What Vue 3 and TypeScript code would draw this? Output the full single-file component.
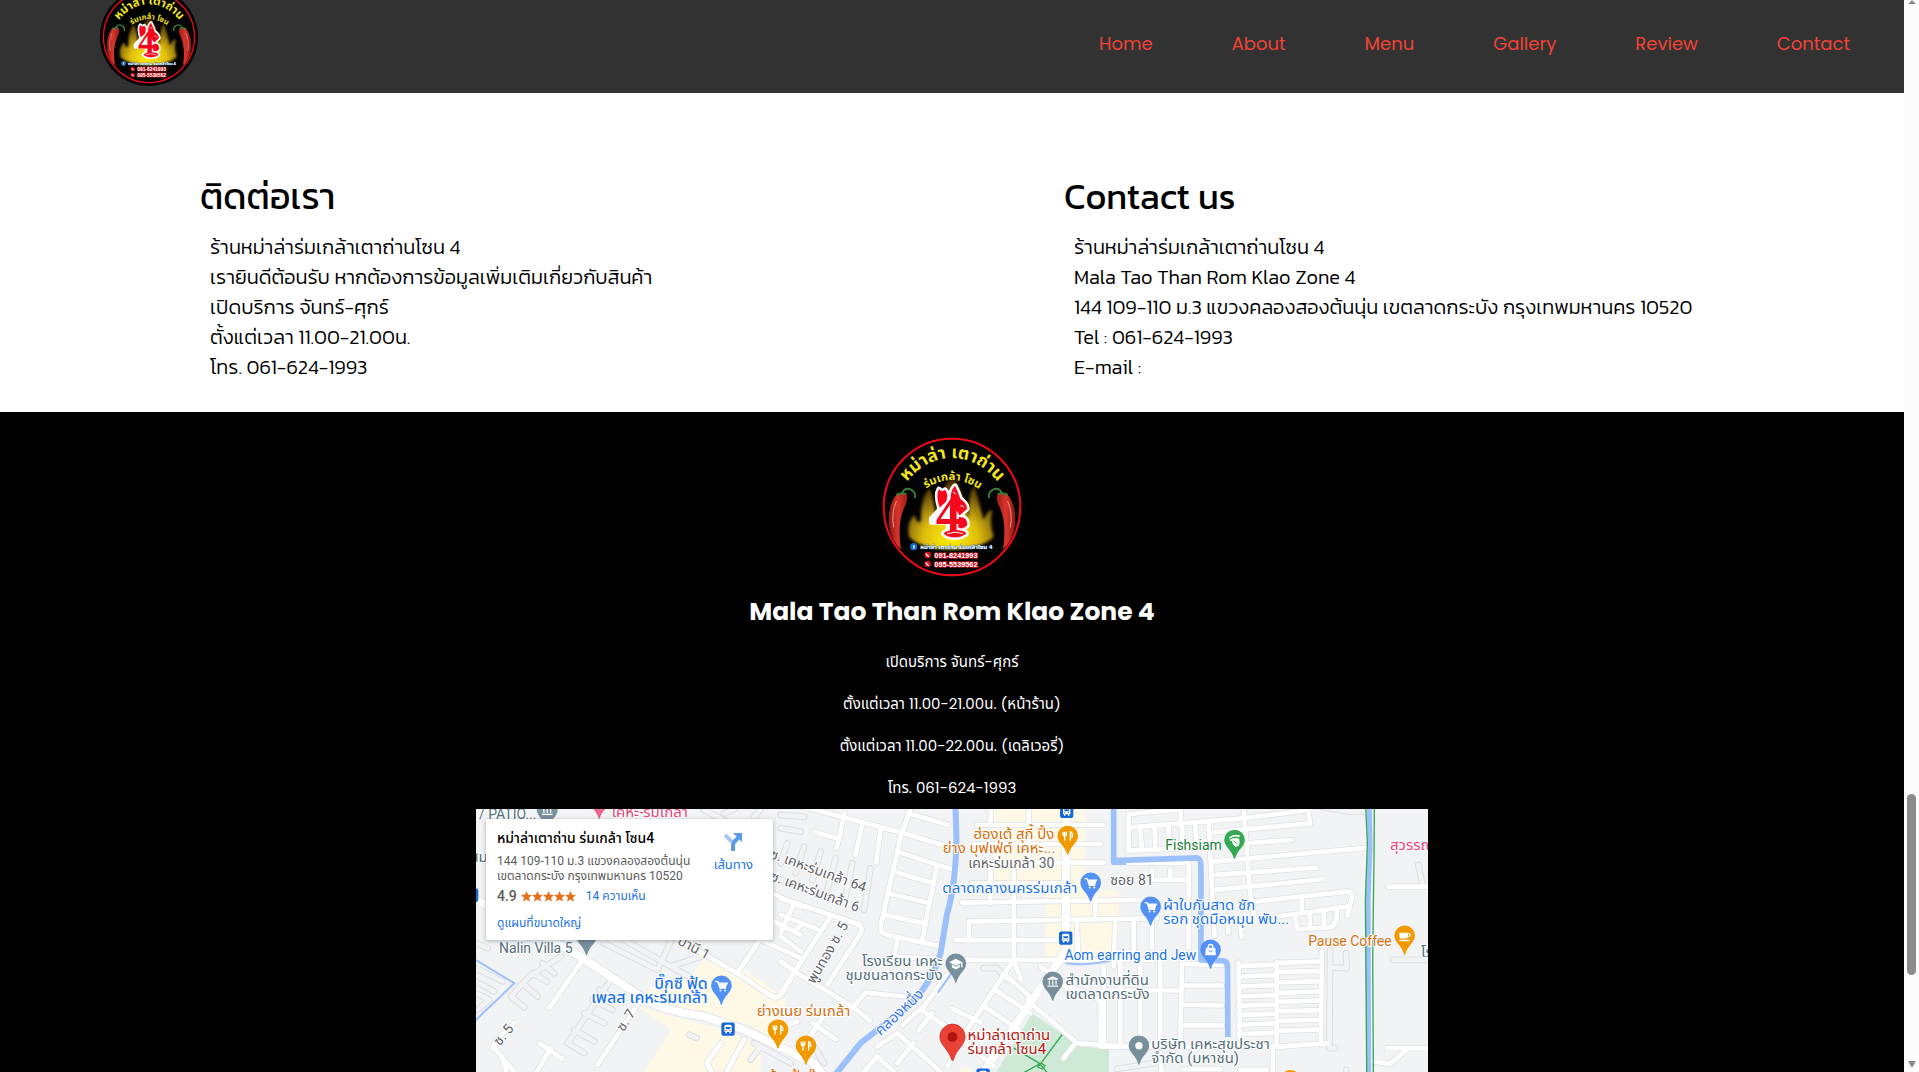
<script setup lang="ts">
interface Block { title: string; lines: string[] }
interface Sheet { dx: number; main: string[]; minor: string[]; lane: string[] }
interface Pin { x: number; y: number; color: string; icon: string }
interface Label { text: string; x: number; y: number; tone: string; end?: boolean; mid?: boolean; turn?: number }
interface Mark { text: string; x: number; y: number; kind: string; size: number }
interface Arc { text: string; path: string; size: number }

const links: string[] = ['Home', 'About', 'Menu', 'Gallery', 'Review', 'Contact']

const blocks: Block[] = [
  {
    title: 'ติดต่อเรา',
    lines: [
      'ร้านหม่าล่าร่มเกล้าเตาถ่านโซน 4',
      'เรายินดีต้อนรับ หากต้องการข้อมูลเพิ่มเติมเกี่ยวกับสินค้า',
      'เปิดบริการ จันทร์-ศุกร์',
      'ตั้งแต่เวลา 11.00-21.00น.',
      'โทร. 061-624-1993',
    ],
  },
  {
    title: 'Contact us',
    lines: [
      'ร้านหม่าล่าร่มเกล้าเตาถ่านโซน 4',
      'Mala Tao Than Rom Klao Zone 4',
      '144 109-110 ม.3 แขวงคลองสองต้นนุ่น เขตลาดกระบัง กรุงเทพมหานคร 10520',
      'Tel : 061-624-1993',
      'E-mail :',
    ],
  },
]

const hours: string[] = [
  'เปิดบริการ จันทร์-ศุกร์',
  'ตั้งแต่เวลา 11.00-21.00น. (หน้าร้าน)',
  'ตั้งแต่เวลา 11.00-22.00น. (เดลิเวอรี่)',
  'โทร. 061-624-1993',
]

// Lettering of the round badge.
const arcs: Arc[] = [
  { text: 'หม่าล่า เตาถ่าน', path: '#arc-top', size: 52 },
  { text: 'ร่มเกล้า โซน', path: '#arc-mid', size: 34 },
]
const marks: Mark[] = [
  { text: '4', x: 228, y: 334, kind: 'four', size: 150 },
  { text: 'f', x: 159, y: 387, kind: 'plain', size: 18 },
  { text: 'หม่าล่า เตาถ่าน ร่มเกล้าโซน 4', x: 182, y: 387, kind: 'note', size: 18 },
  { text: '091-8241993', x: 224, y: 413, kind: 'phone', size: 22 },
  { text: '095-5539562', x: 224, y: 440, kind: 'phone', size: 22 },
]

const rungs = (x1: number, x2: number, ys: number[]): string[] => ys.map((y) => `M${x1} ${y}L${x2} ${y - 4}`)

// Streets, grouped by the three sheets of the map: west, centre, east.
const sheets: Sheet[] = [
  {
    dx: 0,
    main: ['M0 290L320 465L510 590Q560 630 700 650L820 690L1030 790L1060 830'],
    minor: [
      'M335 480L235 625', 'M510 600L380 795', 'M590 400L800 520L900 588Q920 600 935 580L975 510', 'M800 520L880 400',
      'M850 410L990 475', 'M905 280L990 320', 'M930 400L970 310', 'M205 730L275 778', 'M240 745L190 830',
      'M70 745L130 816', 'M110 830L95 780', 'M65 745Q70 720 130 670', 'M900 360L990 405', 'M820 720L760 830', 'M750 730L708 790L730 830',
      'M900 690L980 665',
    ],
    lane: [
      'M120 590L175 530L270 470', 'M120 590L160 622', 'M155 550L200 590', 'M185 520L228 545', 'M215 490L250 520',
      'M15 430L50 445', 'M15 505L95 545', 'M15 545L70 575', 'M15 580L55 600L20 630', 'M420 540L290 730L340 760',
      'M340 640L400 670', 'M365 600L425 630', 'M310 690L370 725', 'M385 570L440 600', 'M400 430L560 510L600 425',
      'M460 420L600 500L690 470', 'M600 500L655 530', 'M655 705L678 715', 'M850 730L960 790',
      'M870 740L840 780', 'M700 30L760 60', 'M760 40L790 28', 'M850 50L870 28',
    ],
  },
  {
    dx: 930,
    main: ['M858 20L856 440Q850 470 835 485L600 830'],
    minor: [
      'M60 18L370 100L495 138', 'M192 40L168 145', 'M100 95L168 115', 'M245 72L225 165', 'M300 90L287 188',
      'M390 42L502 74', 'M392 20L360 110L300 380Q298 398 320 405L475 438', 'M350 155L510 207', 'M470 195L425 420',
      'M340 215L458 250', 'M322 280L448 310', 'M312 345L438 372', 'M350 420L340 470L480 478', 'M0 295L225 370Q250 380 240 400L140 555',
      'M150 350L0 580', 'M0 345L110 388', 'M48 388L65 372', 'M0 410L62 455', 'M0 485L50 520L215 620L268 662', 'M212 628L255 578L370 590',
      'M500 525L430 620L365 675', 'M425 632L510 690L640 800', 'M415 692L455 640', 'M512 625L600 668', 'M700 480L560 690L500 800',
      'M700 200L700 480L722 540', 'M652 575L750 640', 'M612 620L715 690', 'M680 530L760 600', 'M560 480L1120 480', 'M740 600L890 730L1020 740',
      'M885 730L850 775', 'M962 600L960 735', 'M590 75L970 75', 'M580 132L960 132', 'M600 188L970 188', 'M575 250L850 250',
      'M545 308L1090 300', 'M565 415L565 365L1130 355', 'M525 421L845 421', 'M632 20L630 75', 'M745 20L745 200', 'M630 210L630 310',
      'M890 360L892 460', 'M945 260L945 360', 'M95 670L165 718', 'M135 640L75 730', 'M290 740L350 700L480 816', 'M250 816L290 770L340 816',
      'M400 730L350 790', 'M780 500L880 580', 'M830 540L960 600',
    ],
    lane: [
      'M20 130L0 190', 'M70 140L45 220', 'M120 155L95 240', 'M165 175L140 270', 'M215 190L195 290', 'M270 205L250 330', 'M0 240L140 290',
      'M0 45L70 50', 'M0 85L60 95', 'M610 505L650 505L680 540', 'M100 740L130 790',
    ],
  },
  {
    dx: 1890,
    main: [],
    minor: [
      'M240 20L243 80', 'M85 150L85 42L240 28', 'M82 152L320 142', 'M90 82L430 55L628 30', 'M335 98L630 70L622 20', 'M120 85L125 150', 'M163 82L165 148',
      'M205 80L207 146', 'M245 78L248 144', 'M285 76L290 142', 'M325 65L343 408', 'M430 20L450 280L465 370', 'M340 185L805 143', 'M440 130L575 120',
      'M345 225L648 203', 'M345 270L668 238', 'M465 305L740 275Q760 275 755 295L742 348', 'M605 295L605 340', 'M530 350L745 320',
      'M585 350L592 388L690 382Q712 378 710 330', 'M628 345L630 385', 'M670 335L672 382', 'M82 188L265 188L265 445', 'M165 240L265 240', 'M155 208L155 240',
      'M210 210L210 240', 'M45 360L40 500', 'M100 365L100 470', 'M155 365L155 445', 'M383 370L385 398', 'M420 365L425 412', 'M245 492L365 495',
      'M245 492L240 740', 'M248 557L365 557', 'M246 615L365 617', 'M244 677L365 677', 'M180 480L180 740', 'M120 480L120 740', 'M60 490L60 730', 'M10 500L10 740',
      'M0 740L520 742L680 730', 'M0 572L240 572', 'M415 488L420 740', 'M530 488L530 740', 'M665 455L662 735',
      ...rungs(415, 525, [499, 530, 560, 590, 618, 646, 675, 703]), ...rungs(530, 662, [489, 517, 548, 579, 606, 635, 664, 693]),
      'M865 260L990 260', 'M860 745L990 745', 'M818 785L870 792L920 750', 'M518 740L518 830', 'M250 808L360 808', 'M420 810L500 810', 'M180 760L185 830',
    ],
    lane: ['M690 450L688 745L705 745', 'M738 460L740 505L695 503', 'M955 195L968 255', 'M880 480L990 480', 'M50 808L190 785', 'M660 20L750 35L800 35', 'M738 810L738 830'],
  },
]

const blue = '#5491f5'
const slate = '#78909c'
const amber = '#f29900'

const pins: Pin[] = [
  { x: 229, y: 30, color: slate, icon: 'hall' },
  { x: 385, y: 0, color: '#f06292', icon: '' },
  { x: 347, y: 409, color: slate, icon: '' },
  { x: 752, y: 558, color: blue, icon: 'cart' },
  { x: 922, y: 690, color: amber, icon: 'food' },
  { x: 1006, y: 738, color: amber, icon: 'food' },
  { x: 1792, y: 108, color: amber, icon: 'food' },
  { x: 1861, y: 249, color: blue, icon: 'cart' },
  { x: 1456, y: 492, color: slate, icon: 'school' },
  { x: 1747, y: 546, color: slate, icon: 'hall' },
  { x: 2293, y: 120, color: '#34a853', icon: 'fish' },
  { x: 2041, y: 321, color: blue, icon: 'cart' },
  { x: 2221, y: 450, color: blue, icon: 'bag' },
  { x: 2804, y: 408, color: amber, icon: 'cup' },
  { x: 2006, y: 738, color: slate, icon: 'dot' },
  { x: 2461, y: 842, color: amber, icon: '' },
]

const stops: number[][] = [[772, 688], [1789, 34], [1786, 415], [1538, 826], [2, 286]]

const labels: Label[] = [
  { text: '/ PATIO...', x: 3, y: 10, tone: 'slate' },
  { text: 'เคหะ-ร่มเกล้า', x: 136, y: 8, tone: 'pink' },
  { text: 'สม', x: -6, y: 53, tone: 'slate' },
  { text: 'Nalin Villa 5', x: 23, y: 144, tone: 'slate' },
  { text: 'บิ๊กซี ฟู้ด', x: 232, y: 180, tone: 'blue bold', end: true },
  { text: 'เพลส เคหะร่มเกล้า', x: 232, y: 194, tone: 'blue bold', end: true },
  { text: 'ย่างเนย ร่มเกล้า', x: 281, y: 207, tone: 'orange' },
  { text: 'ร้านป้าตุ๊ก', x: 293, y: 272, tone: 'orange' },
  { text: 'ซ. 5', x: 31, y: 229, tone: 'road', mid: true, turn: -50 },
  { text: 'ซ. 7', x: 154, y: 214, tone: 'road', mid: true, turn: -57 },
  { text: 'ปานี 1', x: 216, y: 143, tone: 'road', mid: true, turn: 28 },
  { text: 'พูนทอง ซ. 5', x: 356, y: 146, tone: 'road', mid: true, turn: -60 },
  { text: 'ซ. เคหะร่มเกล้า 64', x: 341, y: 66, tone: 'road', mid: true, turn: 20 },
  { text: 'ซ. เคหะร่มเกล้า 6', x: 338, y: 87, tone: 'road', mid: true, turn: 20 },
  { text: 'คลองหนึ่ง', x: 427, y: 207, tone: 'water', mid: true, turn: -43 },
  { text: 'ฮ่องเต้ สุกี้ ปิ้ง', x: 579, y: 30, tone: 'orange', end: true },
  { text: 'ย่าง บุฟเฟ่ต์ เคหะ...', x: 580, y: 44, tone: 'orange', end: true },
  { text: 'เคหะร่มเกล้า 30', x: 579, y: 59, tone: 'road', end: true },
  { text: 'ตลาดกลางนครร่มเกล้า', x: 602, y: 84, tone: 'blue', end: true },
  { text: 'โรงเรียน เคหะ', x: 467, y: 157, tone: 'slate', end: true },
  { text: 'ชุมชนลาดกระบัง', x: 467, y: 171, tone: 'slate', end: true },
  { text: 'Aom earring and Jew', x: 589, y: 151, tone: 'blue' },
  { text: 'สำนักงานที่ดิน', x: 590, y: 176, tone: 'slate' },
  { text: 'เขตลาดกระบัง', x: 590, y: 190, tone: 'slate' },
  { text: 'หม่าล่าเตาถ่าน', x: 492, y: 231, tone: 'red' },
  { text: 'ร่มเกล้า โซน4', x: 492, y: 245, tone: 'red' },
  { text: 'Fishsiam', x: 690, y: 41, tone: 'green' },
  { text: 'ซอย 81', x: 635, y: 76, tone: 'road' },
  { text: 'ผ้าใบกันสาด ชัก', x: 688, y: 101, tone: 'blue' },
  { text: 'รอก ชุดมือหมุน พับ...', x: 688, y: 115, tone: 'blue' },
  { text: 'Pause Coffee', x: 833, y: 137, tone: 'orange' },
  { text: 'โรง', x: 946, y: 148, tone: 'slate' },
  { text: 'บริษัท เคหะสุขประชา', x: 676, y: 240, tone: 'slate' },
  { text: 'จำกัด (มหาชน)', x: 676, y: 254, tone: 'slate' },
  { text: 'สุวรรณภูมิ', x: 915, y: 41, tone: 'pink' },
]

const isThai = (l: Label): boolean => /[ก-๛]/.test(l.text)
const anchorOf = (l: Label): 'end' | 'middle' | 'start' => (l.end ? 'end' : l.mid ? 'middle' : 'start')
const turnOf = (l: Label): string | undefined => (l.turn ? `rotate(${l.turn} ${l.x} ${l.y})` : undefined)
</script>

<template>
  <div class="window">
    <svg class="defs" aria-hidden="true">
      <defs>
        <radialGradient id="flame" cx="50%" cy="85%" r="80%">
          <stop offset="0" stop-color="#fff200" />
          <stop offset="0.4" stop-color="#e0bd10" />
          <stop offset="1" stop-color="#6b4303" stop-opacity="0.6" />
        </radialGradient>
        <linearGradient id="chili" x1="0" x2="1">
          <stop offset="0" stop-color="#8e1712" />
          <stop offset="0.5" stop-color="#d8352c" />
          <stop offset="1" stop-color="#9d1c16" />
        </linearGradient>
        <filter id="glow" x="-20%" y="-20%" width="140%" height="140%"><feGaussianBlur stdDeviation="4" /></filter>
        <path id="arc-top" d="M128 204Q190 114 277 114Q364 114 428 204" />
        <path id="arc-mid" d="M188 214Q277 146 370 216" />
      </defs>
      <symbol id="badge" viewBox="52 36 450 450">
        <circle cx="277" cy="261" r="221" fill="#020202" />
        <path filter="url(#glow)" fill="url(#flame)" d="M148 350Q140 310 164 285Q176 320 184 300Q182 235 210 203Q226 245 226 300Q246 190 282 166Q310 220 326 300Q326 215 344 196Q358 250 372 300Q388 265 398 272Q388 310 402 350Q370 385 277 388Q180 386 148 350Z" />
        <circle cx="277" cy="261" r="205" fill="none" stroke="#ec0a18" stroke-width="6" />
        <g v-for="side in ['', 'translate(554 0) scale(-1 1)']" :key="side" :transform="side">
          <path fill="url(#chili)" d="M112 222Q128 216 142 226Q146 240 134 262Q112 310 124 388Q96 366 88 318Q82 256 112 222Z" />
          <path fill="none" stroke="#f09a90" stroke-width="3" d="M110 244Q94 280 102 322" />
          <path fill="none" stroke="#3c7d35" stroke-width="6" stroke-linecap="round" d="M112 224Q124 216 138 222M128 218Q138 200 156 210Q170 220 166 232" />
        </g>
        <g v-for="c in ['#fff', '#f5081b']" :key="c" :fill="c" :stroke="c" :stroke-width="c === '#fff' ? 16 : 1" stroke-linejoin="round">
          <path d="M240 262Q228 226 238 208Q246 218 256 210Q268 222 258 246ZM274 246Q270 214 286 198Q296 218 302 238Q320 248 322 266L300 286Z" />
          <path d="M298 292Q324 290 322 316Q310 330 296 322ZM252 340Q266 330 288 330Q314 332 320 340Q308 352 286 352Q262 352 252 340Z" />
          <path v-if="c === '#fff'" d="M262 246L216 296V306H266V330H296V306H306V240H270Z" />
        </g>
        <path fill="none" stroke="#fff" stroke-width="3" d="M262 341Q286 332 310 341M302 258Q308 254 314 262M280 216L290 222" />
        <circle cx="162" cy="380" r="11" fill="#1769c0" />
        <g v-for="y in [405, 432]" :key="y">
          <circle cx="204" :cy="y" r="10" fill="#e00b1b" />
          <path :d="`M199 ${y - 5}q2 8 9 10`" fill="none" stroke="#fff" stroke-width="4" />
        </g>
      </symbol>
      <symbol id="i-food" viewBox="-30 -30 60 60"><path d="M-14-13V-6Q-14 0-9 0T-4-6V-13M-9-13V14M8 14V-12Q15-10 14 2H8" fill="none" stroke="#fff" stroke-width="4" /></symbol>
      <symbol id="i-cart" viewBox="-30 -30 60 60"><path d="M-18-13h7l7 20h18M-9-8h26l-5 11H-5" fill="none" stroke="#fff" stroke-width="4" /><path d="M-8-7h24l-5 9H-5z" fill="#fff" /><circle cx="-3" cy="14" r="3" fill="#fff" /><circle cx="11" cy="14" r="3" fill="#fff" /></symbol>
      <symbol id="i-school" viewBox="-30 -30 60 60"><path d="M0-15L20-5L0 6L-20-5ZM-12 2L0 9L12 2V10L0 17L-12 10ZM16-4h4v14h-4z" fill="#fff" /></symbol>
      <symbol id="i-hall" viewBox="-30 -30 60 60"><path d="M0-17L16-9v3h-32v-3ZM-12-4h4V9h-4zM-2-4h4V9h-4zM8-4h4V9H8zM-16 11h32v4h-32z" fill="#fff" /></symbol>
      <symbol id="i-fish" viewBox="-30 -30 60 60"><path d="M-16-8Q-4-20 16-14L14-8Q0-14-16-4ZM-16 0Q-2-10 14-4Q20 20 2 20Q-6 14-8 4Z" fill="#fff" /><path d="M-4 2L8 12" stroke="#34a853" stroke-width="3" /></symbol>
      <symbol id="i-bag" viewBox="-30 -30 60 60"><path d="M-14-6h28l2 22h-32z" fill="#fff" /><path d="M-7-4v-5q0-7 7-7t7 7v5" fill="none" stroke="#fff" stroke-width="4" /><path d="M-6 2q6 9 12 0" fill="none" stroke="#5491f5" stroke-width="3" /></symbol>
      <symbol id="i-cup" viewBox="-30 -30 60 60"><path d="M-16-9h26v11q0 6-6 6h-14q-6 0-6-6zM-16 12h32v4h-32z" fill="#fff" /><path d="M10-7h7v8h-7" fill="none" stroke="#fff" stroke-width="3" /></symbol>
      <symbol id="i-dot" viewBox="-30 -30 60 60"><circle r="11" fill="#fff" /></symbol>
    </svg>

    <div class="page">
      <header class="top">
        <a class="brand" href="#home" aria-label="Mala Tao Than Rom Klao Zone 4">
          <svg class="logo small" viewBox="52 36 450 450">
            <use href="#badge" x="52" y="36" width="450" height="450" />
            <text v-for="a in arcs" :key="a.text" class="mark arc" :font-size="a.size"><textPath :href="a.path" startOffset="50%" text-anchor="middle">{{ a.text }}</textPath></text>
            <text v-for="m in marks" :key="m.text" :class="['mark', m.kind]" :x="m.x" :y="m.y" :font-size="m.size">{{ m.text }}</text>
          </svg>
        </a>
        <nav class="nav">
          <a v-for="l in links" :key="l" :href="'#' + l.toLowerCase()">{{ l }}</a>
        </nav>
      </header>

      <main class="contact">
        <section v-for="b in blocks" :key="b.title" class="block">
          <h2>{{ b.title }}</h2>
          <p v-for="line in b.lines" :key="line">{{ line }}</p>
        </section>
      </main>

      <footer class="footer">
        <svg class="logo" viewBox="52 36 450 450">
          <use href="#badge" x="52" y="36" width="450" height="450" />
          <text v-for="a in arcs" :key="a.text" class="mark arc" :font-size="a.size"><textPath :href="a.path" startOffset="50%" text-anchor="middle">{{ a.text }}</textPath></text>
          <text v-for="m in marks" :key="m.text" :class="['mark', m.kind]" :x="m.x" :y="m.y" :font-size="m.size">{{ m.text }}</text>
        </svg>
        <h1>Mala Tao Than Rom Klao Zone 4</h1>
        <p v-for="h in hours" :key="h">{{ h }}</p>

        <div class="map">
          <svg class="canvas" viewBox="0 0 953 263" preserveAspectRatio="xMidYMin slice">
            <g transform="translate(-5 -9) scale(0.33333)">
              <g class="sand">
                <path d="M700 478L830 512L945 600L930 700L960 740L820 670L620 630L500 610L540 562L600 550L660 530Z" />
                <path d="M500 620L760 690L870 740L870 830H510L600 690Z" />
                <path d="M1570 20H1845V270H1945V415H1930V470H1725V270H1570ZM1480 800L1540 830H1450Z" />
              </g>
              <path class="park" d="M1685 640L1830 740L1916 748V830H1570Z" />
              <path class="trail" d="M1775 705L1712 790L1640 830M1630 745L1706 790L1740 830M1712 790l12 8l-8 10l-14-6z" />
              <g v-for="pass in ['edge', 'fill']" :key="pass" :class="pass">
                <g v-for="s in sheets" :key="s.dx" :transform="`translate(${s.dx} 0)`">
                  <path v-for="d in s.lane" :key="d" class="lane" :d="d" />
                  <path v-for="d in s.minor" :key="d" class="minor" :d="d" />
                  <path v-for="d in s.main" :key="d" class="main" :d="d" />
                </g>
              </g>
              <g class="water-line">
                <path stroke-width="6" d="M10 478L130 550L10 665M1450 510L1402 578M1785 490Q1850 500 1930 480" />
                <path stroke-width="18" d="M1455 20L1458 120Q1455 260 1430 340L1410 460Q1380 560 1310 620L1170 730L1090 830" />
                <path stroke-width="17" d="M1930 20V187L1968 187M1930 182L2180 174Q2192 176 2192 200V480L2260 483Q2272 486 2272 500L2273 712" />
                <path stroke-width="15" d="M2698 20L2700 140L2694 300L2696 830" />
              </g>
              <path class="trail" d="M2687 20L2692 130L2686 300L2690 830M2713 20L2712 160L2708 480L2710 830" />
              <g v-for="(s, i) in stops" :key="i" :transform="`translate(${s[0]} ${s[1]})`">
                <rect x="-20" y="-20" width="40" height="40" rx="6" fill="#1967d2" />
                <path fill="#fff" fill-rule="evenodd" d="M-11-8q0-5 5-5H6q5 0 5 5V9H8v4H4V9H-4v4H-8V9h-3zM-7-6V0H7V-6zM-7 3h3v3h-3zM4 3h3v3H4z" />
              </g>
              <g v-for="(p, i) in pins" :key="i" :transform="`translate(${p.x} ${p.y})`">
                <path :fill="p.color" d="M0-31A31 31 0 0 1 31 0C31 20 8 30 2 55Q0 59-2 55C-8 30-31 20-31 0A31 31 0 0 1 0-31Z" />
                <use v-if="p.icon" :href="'#i-' + p.icon" x="-30" y="-30" width="60" height="60" />
              </g>
              <g transform="translate(1446 712)">
                <path fill="#ea4335" stroke="#c5221f" stroke-width="2" d="M0-39A38 38 0 0 1 38 0C38 24 10 38 3 68Q0 73-3 68C-10 38-38 24-38 0A38 38 0 0 1 0-39Z" />
                <circle r="15" fill="#b31412" />
              </g>
            </g>
            <text v-for="(l, i) in labels" :key="i" :x="l.x" :y="l.y" :class="['label', l.tone, { thai: isThai(l) }]" :text-anchor="anchorOf(l)" :transform="turnOf(l)">{{ l.text }}</text>
          </svg>

          <article class="card">
            <div class="place">
              <strong>หม่าล่าเตาถ่าน ร่มเกล้า โซน4</strong>
              <address>144 109-110 ม.3 แขวงคลองสองต้นนุ่น<br />เขตลาดกระบัง กรุงเทพมหานคร 10520</address>
              <div class="rating">
                <b>4.9</b>
                <svg viewBox="0 0 55 11" width="55" height="11" aria-label="4.9">
                  <path v-for="n in 5" :key="n" :transform="`translate(${(n - 1) * 11} 0)`" fill="#e7711b" d="M5.5 0L7.1 3.8L11 4.1L8 6.7L9 10.6L5.5 8.5L2 10.6L3 6.7L0 4.1L3.9 3.8Z" />
                </svg>
                <a href="#reviews">14 ความเห็น</a>
              </div>
              <a class="larger" href="#map">ดูแผนที่ขนาดใหญ่</a>
            </div>
            <a class="directions" href="#directions">
              <svg viewBox="0 0 18 18" width="18" height="18">
                <path d="M1 2L8 9" stroke="#a9c7f5" stroke-width="4" />
                <path d="M9 18V12Q9 10 11 8L15 4" fill="none" stroke="#5c9bea" stroke-width="4" />
                <path d="M9 0H18V9Z" fill="#5c9bea" />
              </svg>
              <span>เส้นทาง</span>
            </a>
          </article>
        </div>
      </footer>
    </div>

    <div class="scrollbar" aria-hidden="true">
      <i class="arrow up"></i>
      <i class="thumb"></i>
      <i class="arrow down"></i>
    </div>
  </div>
</template>

<style>
body {
  margin: 0;
  background: #fff;
}
</style>

<style scoped>
* {
  box-sizing: border-box;
}
.window {
  display: flex;
  height: 100vh;
  overflow: hidden;
  font-family: Poppins, Inter, "Noto Sans Thai", sans-serif;
}
.defs {
  position: absolute;
  width: 0;
  height: 0;
}
.page {
  display: flex;
  flex: 1;
  flex-direction: column;
  min-width: 0;
}
.top {
  display: flex;
  flex: none;
  align-items: center;
  justify-content: space-between;
  height: 93px;
  padding: 0 54px 6px 99px;
  background: #323232;
}
.brand {
  display: flex;
  align-self: flex-end;
}
.logo {
  display: block;
  width: 150px;
  height: 150px;
}
.logo.small {
  width: 100px;
  height: 100px;
}
.mark {
  font-family: "Liberation Sans", "Noto Sans Thai", sans-serif;
  font-weight: 700;
}
.arc {
  fill: #f3e51c;
}
.four {
  fill: #f5081b;
  font-family: "Liberation Serif", serif;
}
.plain {
  fill: #fff;
}
.note {
  fill: #fff;
  stroke: #1d5fa8;
  stroke-width: 2px;
  paint-order: stroke;
}
.phone {
  fill: #fff;
  stroke: #e00b1b;
  stroke-width: 4px;
  paint-order: stroke;
}
.nav {
  display: flex;
  gap: 79px;
}
.nav a {
  color: #f44336;
  font-size: 18px;
  line-height: 28px;
  text-decoration: none;
}
.contact {
  display: grid;
  flex: none;
  grid-template-columns: 864px 1fr;
  padding: 78px 0 30px 200px;
  color: #000;
  font-family: Kanit, "Noto Sans", "Noto Sans Thai", sans-serif;
  font-weight: 300;
}
.block h2 {
  margin: 0 0 11px;
  font-size: 36px;
  font-weight: 400;
  line-height: 50px;
}
.block p {
  margin: 0;
  padding-left: 10px;
  font-size: 20px;
  line-height: 30px;
  white-space: nowrap;
}
.footer {
  display: flex;
  flex: 1;
  flex-direction: column;
  align-items: center;
  padding-top: 20px;
  background: #000;
  color: #fff;
}
.footer h1 {
  margin: 9px 0;
  font-size: 25px;
  font-weight: 700;
  line-height: 41px;
}
.footer p {
  margin: 0;
  font-size: 15px;
  font-weight: 400;
  line-height: 42px;
}
.map {
  position: relative;
  width: 50%;
  background: #f1f3f4;
}
.canvas {
  display: block;
  width: 100%;
  overflow: hidden;
}
.sand {
  fill: #fef8e6;
}
.park {
  fill: #ceead6;
}
.trail {
  fill: none;
  stroke: #34a853;
  stroke-width: 4;
}
.edge,
.fill,
.water-line {
  fill: none;
  stroke-linecap: round;
  stroke-linejoin: round;
}
.water-line {
  stroke: #9cc0fa;
  stroke-linecap: butt;
}
.edge {
  stroke: #dcdee2;
}
.fill {
  stroke: #fff;
}
.edge .lane {
  stroke-width: 20px;
}
.fill .lane {
  stroke: #f1f3f4;
  stroke-width: 14px;
}
.edge .minor {
  stroke-width: 18px;
}
.fill .minor {
  stroke-width: 14px;
}
.edge .main {
  stroke-width: 28px;
}
.fill .main {
  stroke-width: 24px;
}
.label {
  font: 400 14px Roboto, "Noto Sans Thai", sans-serif;
  paint-order: stroke;
  stroke: #fff;
  stroke-linejoin: round;
  stroke-width: 2px;
}
.label.thai {
  font-size: 15px;
}
.label.road {
  font-size: 14px;
}
.label.bold {
  font-size: 16px;
  font-weight: 500;
}
.slate {
  fill: #546e7a;
}
.road {
  fill: #5f6368;
}
.blue {
  fill: #1a73e8;
}
.water {
  fill: #3b78e7;
}
.pink {
  fill: #e83e78;
}
.orange {
  fill: #d56e0c;
}
.green {
  fill: #188038;
}
.red {
  fill: #b31412;
}
.card {
  position: absolute;
  top: 10px;
  left: 10px;
  display: flex;
  justify-content: space-between;
  width: 287px;
  height: 121px;
  padding: 9px 20px 0 11px;
  background: #fff;
  border-radius: 2px;
  box-shadow: 0 1px 4px rgba(0, 0, 0, 0.3);
  font-family: Roboto, "Noto Sans Thai", sans-serif;
  font-size: 12px;
  line-height: 15px;
  white-space: nowrap;
}
.card a {
  color: #1a73e8;
  text-decoration: none;
}
.card strong {
  display: block;
  color: #000;
  font-size: 14px;
  font-weight: 500;
  line-height: 21px;
}
.card address {
  margin-top: 5px;
  color: #5b5b5b;
  font-style: normal;
}
.rating {
  display: flex;
  align-items: center;
  gap: 4px;
  margin-top: 3px;
  line-height: 18px;
}
.rating b {
  color: #5b5b5b;
  font-size: 14px;
  font-weight: 500;
}
.rating a {
  margin-left: 6px;
}
.larger {
  display: block;
  margin-top: 9px;
  line-height: 18px;
}
.directions {
  display: flex;
  flex-direction: column;
  align-items: center;
  gap: 6px;
  padding-top: 5px;
  font-size: 13px;
}
.scrollbar {
  display: grid;
  flex: none;
  grid-template-rows: 4px 790fr 181fr 86fr 11px;
  justify-items: center;
  width: 15px;
  background: #fcfcfc;
}
.arrow {
  width: 0;
  height: 0;
  border: 4px solid transparent;
}
.up {
  border-top: 0;
  border-bottom: 4px solid #8b8b8b;
}
.down {
  grid-row: 5;
  border-top: 7px solid #8b8b8b;
  border-bottom: 0;
}
.thumb {
  grid-row: 3;
  width: 9px;
  border-radius: 5px;
  background: #8b8b8b;
}
</style>
